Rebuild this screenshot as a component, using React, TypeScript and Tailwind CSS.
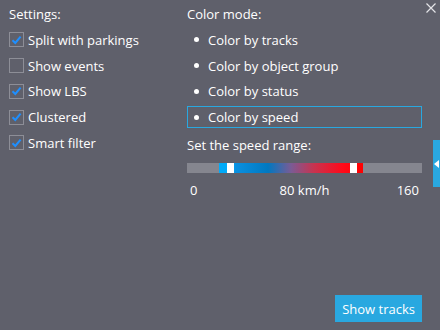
import React from "react";

const font = { fontFamily: '"Open Sans", "Noto Sans", sans-serif' };

function Check({ checked }: { checked: boolean }) {
  return (
    <div className="w-[15px] h-[15px] border border-[#8d8e97] flex items-center justify-center shrink-0">
      {checked && (
        <svg width="11" height="10" viewBox="0 0 11 10">
          <path d="M1.5 5.2 L4.3 8 L9.6 1.6" fill="none" stroke="#1e8fff" strokeWidth="2" />
        </svg>
      )}
    </div>
  );
}

const settings = [
  { label: "Split with parkings", checked: true },
  { label: "Show events", checked: false },
  { label: "Show LBS", checked: true },
  { label: "Clustered", checked: true },
  { label: "Smart filter", checked: true },
];

const modes = ["Color by tracks", "Color by object group", "Color by status", "Color by speed"];

export default function App() {
  return (
    <div
      className="relative w-[440px] h-[330px] bg-[#5f606b] text-[13px] leading-[18px] text-white flex flex-col overflow-hidden"
      style={font}
    >
      <div className="flex">
        <div className="w-[187px] pl-[9px] pt-[5px]">
          <div className="h-[18px]">Settings:</div>
          <div className="mt-[4px]">
            {settings.map((s) => (
              <div key={s.label} className="h-[25.75px] flex items-center gap-[4px]">
                <Check checked={s.checked} />
                <span>{s.label}</span>
              </div>
            ))}
          </div>
        </div>
        <div className="flex-1 pr-[18px] pt-[5px]">
          <div className="h-[18px]">Color mode:</div>
          <div className="mt-[4px]">
            {modes.map((m, i) => (
              <div key={m} className="h-[25.75px] flex items-center">
                <div
                  className={
                    "w-full h-[22px] flex items-center pl-[6px] " +
                    (i === 3 ? "border border-[#29a8e0]" : "border border-transparent")
                  }
                >
                  <span className="w-[5px] h-[5px] rounded-full bg-white mr-[9px]" />
                  <span>{m}</span>
                </div>
              </div>
            ))}
          </div>
          <div className="mt-[6px] h-[18px]">Set the speed range:</div>
          <div className="relative mt-[9px] h-[10px] bg-[#85868f]">
            <div
              className="absolute top-0 h-full left-[32px] w-[144px]"
              style={{
                background:
                  "linear-gradient(to right, #00aaf8 0%, #00aaf8 8%, #0a90e0 12%, #0078c0 34%, #7a5b95 50%, #c8334f 66%, #ff0a1a 86%, #ff0000 100%)",
              }}
            />
            <div className="absolute top-0 h-full left-[40px] w-[7px] bg-white" />
            <div className="absolute top-0 h-full left-[163px] w-[7px] bg-white" />
          </div>
          <div className="mt-[8px] grid grid-cols-3 px-[3px]">
            <span className="text-left">0</span>
            <span className="text-center">80 km/h</span>
            <span className="text-right">160</span>
          </div>
        </div>
      </div>
      <div className="mt-auto mb-[8px] mr-[18px] self-end">
        <button className="h-[27px] px-[7px] bg-[#29a8e0] text-white text-[13px]" style={font}>
          Show tracks
        </button>
      </div>
      <svg className="absolute top-[3px] right-[4px]" width="10" height="10" viewBox="0 0 10 10">
        <path d="M0.5 0.5 L9.5 9.5 M9.5 0.5 L0.5 9.5" stroke="#e4e4e8" strokeWidth="1.2" />
      </svg>
      <div className="absolute right-0 top-[140px] w-[7px] h-[47px] bg-[#29a8e0] flex items-center justify-center">
        <svg width="5" height="8" viewBox="0 0 5 8">
          <path d="M0 4 L5 0 L5 8 Z" fill="#ffffff" />
        </svg>
      </div>
    </div>
  );
}
